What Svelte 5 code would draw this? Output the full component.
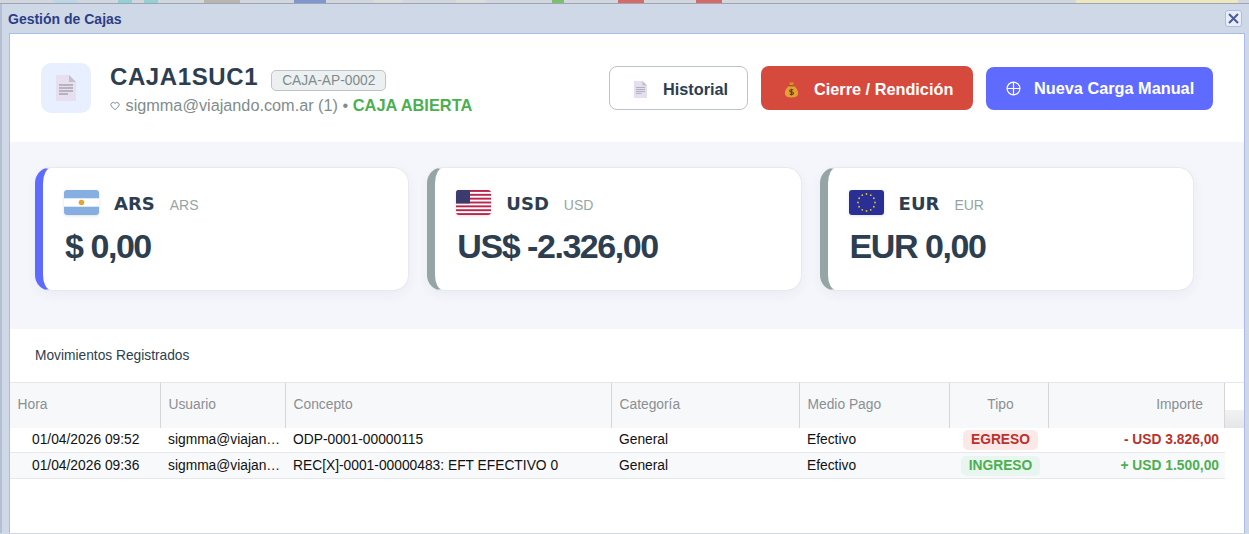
<script>
  const cards = [
    { code: 'ARS', total: '$ 0,00', accent: 'active' },
    { code: 'USD', total: 'US$ -2.326,00', accent: '' },
    { code: 'EUR', total: 'EUR 0,00', accent: '' }
  ];

  const columns = [
    { label: 'Hora', width: 151, cls: '' },
    { label: 'Usuario', width: 125, cls: '' },
    { label: 'Concepto', width: 326, cls: '' },
    { label: 'Categoría', width: 188, cls: '' },
    { label: 'Medio Pago', width: 150, cls: '' },
    { label: 'Tipo', width: 99, cls: 'center' },
    { label: 'Importe', width: 176, cls: 'right' }
  ];

  const rows = [
    { hora: '01/04/2026 09:52', usuario: 'sigmma@viajando.com.ar', concepto: 'ODP-0001-00000115', categoria: 'General', medio: 'Efectivo', tipo: 'EGRESO', importe: '- USD 3.826,00' },
    { hora: '01/04/2026 09:36', usuario: 'sigmma@viajando.com.ar', concepto: 'REC[X]-0001-00000483: EFT EFECTIVO 0', categoria: 'General', medio: 'Efectivo', tipo: 'INGRESO', importe: '+ USD 1.500,00' }
  ];

  // what shows of the page behind the window
  const behind = [
    [54, ''], [24, 'b1'], [40, ''], [14, 'b2'], [12, ''], [14, 'b2'], [46, ''], [36, 'b3'],
    [54, ''], [32, 'b4'], [48, ''], [28, 'b5'], [54, ''], [30, 'b5'], [66, ''], [12, 'b7'],
    [54, ''], [26, 'b8'], [52, ''], [26, 'b8'], [354, ''], [162, 'b6']
  ];

  const stars = Array.from({ length: 12 }, (_, i) => {
    const a = (i * Math.PI) / 6;
    return { x: 17.5 + Math.cos(a) * 8.5, y: 12.5 + Math.sin(a) * 8.5 };
  });
</script>

{#snippet docIcon(w, h)}
  <svg width={w} height={h} viewBox="0 0 20 26">
    <path d="M0 0H13L20 7V26H0Z" fill="#e6dff0" />
    <path d="M13 0L20 7H13Z" fill="#c4c0c8" />
    <path d="M3 10H17M3 13H17M3 16H17M3 19H12" stroke="#a9a5ad" stroke-width="1.3" />
  </svg>
{/snippet}

{#snippet flag(code)}
  <svg class="flag" width="35" height="25" viewBox="0 0 35 25">
    {#if code === 'ARS'}
      <rect width="35" height="25" fill="#fff" />
      <rect width="35" height="8.3" fill="#86aee0" />
      <rect y="16.7" width="35" height="8.3" fill="#86aee0" />
      <circle cx="17.5" cy="12.5" r="2.8" fill="#e0a82e" />
    {:else if code === 'USD'}
      <rect width="35" height="25" fill="#fff" />
      {#each [0, 1, 2, 3, 4, 5, 6] as s}
        <rect y={s * 3.85} width="35" height="1.92" fill="#b8264e" />
      {/each}
      <rect width="14" height="13.4" fill="#3c3b6e" />
    {:else}
      <rect width="35" height="25" fill="#2a2f96" />
      {#each stars as s}
        <circle cx={s.x} cy={s.y} r="0.9" fill="#e2c428" />
      {/each}
    {/if}
  </svg>
{/snippet}

<div class="desk">
  <div class="behind">
    {#each behind as [w, cls]}
      <span class={cls} style="width:{w}px"></span>
    {/each}
  </div>

  <section class="window">
    <header class="titlebar">
      <span class="title">Gestión de Cajas</span>
      <button class="close" aria-label="Cerrar">
        <svg width="11" height="11" viewBox="0 0 11 11"><path d="M1 1L10 10M10 1L1 10" stroke="#4a5a9a" stroke-width="2" /></svg>
      </button>
    </header>

    <div class="body">
      <div class="head">
        <div class="head-left">
          <div class="logo">{@render docIcon(20, 26)}</div>
          <div>
            <div class="name-row">
              <h1>CAJA1SUC1</h1>
              <span class="code">CAJA-AP-0002</span>
            </div>
            <div class="sub">
              <svg class="heart" width="10" height="10" viewBox="0 0 12 12"><path d="M6 10.6L1.5 6A2.7 2.7 0 0 1 6 2.9A2.7 2.7 0 0 1 10.5 6Z" fill="none" stroke="#7f8c8d" stroke-width="1.2" /></svg>
              sigmma@viajando.com.ar (1) • <b>CAJA ABIERTA</b>
            </div>
          </div>
        </div>
        <div class="actions">
          <button class="btn ghost">{@render docIcon(13, 17)}<span>Historial</span></button>
          <button class="btn red">
            <svg width="15" height="18" viewBox="0 0 17 19">
              <path d="M6 1H11L10 4.5H7Z" fill="#d9952a" />
              <path d="M6.5 4.5H10.5C14 7 16 10 16 13C16 17 13 18 8.5 18C4 18 1 17 1 13C1 10 3 7 6.5 4.5Z" fill="#e2a035" />
              <rect x="6" y="4" width="5" height="1.4" fill="#8a5a18" />
              <path d="M10.5 9.2H7.8A1.3 1.3 0 0 0 7.8 11.8H9.4A1.3 1.3 0 0 1 9.4 14.4H6.6M8.5 8V15.6" fill="none" stroke="#6b3d10" stroke-width="1.3" />
            </svg>
            <span>Cierre / Rendición</span>
          </button>
          <button class="btn blue">
            <svg width="15" height="15" viewBox="0 0 15 15"><circle cx="7.5" cy="7.5" r="6.4" fill="none" stroke="#fff" stroke-width="1.2" /><path d="M1 7.5H14M7.5 1V14" stroke="#fff" stroke-width="1.2" /></svg>
            <span>Nueva Carga Manual</span>
          </button>
        </div>
      </div>

      <div class="summary">
        {#each cards as card}
          <article class="card {card.accent}">
            <div class="card-top">
              {@render flag(card.code)}
              <strong>{card.code}</strong>
              <small>{card.code}</small>
            </div>
            <div class="total">{card.total}</div>
          </article>
        {/each}
      </div>

      <div class="label">Movimientos Registrados</div>

      <div class="grid">
        <div class="grid-head">
          {#each columns as col}
            <div class="th {col.cls}" style="width:{col.width}px">{col.label}</div>
          {/each}
          <div class="filler"></div>
        </div>
        {#each rows as row, i}
          <div class="tr" class:alt={i === 1}>
            <div class="td hora" style="width:{columns[0].width}px">{row.hora}</div>
            <div class="td" style="width:{columns[1].width}px"><span class="clip">{row.usuario}</span></div>
            <div class="td" style="width:{columns[2].width}px">{row.concepto}</div>
            <div class="td" style="width:{columns[3].width}px">{row.categoria}</div>
            <div class="td" style="width:{columns[4].width}px">{row.medio}</div>
            <div class="td center" style="width:{columns[5].width}px">
              <span class="pill" class:in={row.tipo === 'INGRESO'}>{row.tipo}</span>
            </div>
            <div class="td right amount" class:in={row.tipo === 'INGRESO'} style="width:{columns[6].width}px">{row.importe}</div>
          </div>
        {/each}
      </div>
    </div>
  </section>
</div>

<style>
  :global(body) {
    margin: 0;
    background: #fff;
  }

  .desk {
    width: 1249px;
    height: 534px;
    overflow: hidden;
    font-family: 'Liberation Sans', Arial, sans-serif;
    background: #cfd8e6;
  }

  .behind {
    display: flex;
    height: 4px;
    background: #d3d6dc;
    border-bottom: 1px solid #9aa5b5;
    box-sizing: border-box;
  }

  .b1 { background: #bcd6e6; }
  .b2 { background: #93cfd3; }
  .b3 { background: #b9b5ad; }
  .b4 { background: #7f97cf; }
  .b5 { background: #dcdcdc; }
  .b6 { background: #efe8bf; }
  .b7 { background: #7cc06a; }
  .b8 { background: #d66a66; }

  .window {
    padding-left: 7px;
    padding-right: 4px;
    border-left: 2px solid #b4bfd4;
  }

  .titlebar {
    height: 29px;
    display: flex;
    align-items: center;
    justify-content: space-between;
  }

  .title {
    font-size: 14px;
    font-weight: 700;
    color: #2c3e85;
    padding-top: 1px;
    margin-left: -1px;
  }

  .close {
    width: 17px;
    height: 17px;
    padding: 0;
    display: flex;
    align-items: center;
    justify-content: center;
    background: #e8eefb;
    border: 1px solid #a9bce8;
    border-radius: 3px;
    margin-right: 3px;
  }

  .body {
    height: 500px;
    background: #fff;
    border: 1px solid #a9bce8;
    border-bottom: 0;
    box-sizing: border-box;
  }

  .head {
    height: 108px;
    box-sizing: border-box;
    padding: 29px 31px 0 31px;
    display: flex;
    justify-content: space-between;
  }

  .head-left {
    display: flex;
    gap: 19px;
  }

  .logo {
    width: 50px;
    height: 50px;
    background: #e8effe;
    border-radius: 10px;
    display: flex;
    align-items: center;
    justify-content: center;
  }

  .name-row {
    display: flex;
    align-items: center;
    gap: 13px;
    height: 28px;
  }

  h1 {
    margin: 0;
    font-size: 24px;
    font-weight: 700;
    color: #2c3e50;
    letter-spacing: 0.6px;
  }

  .code {
    margin-top: 7px;
    font-size: 13.75px;
    color: #7f8c8d;
    background: #ecf0f1;
    border: 1px solid #bdc3c7;
    border-radius: 5px;
    padding: 2px 10px;
  }

  .sub {
    margin-top: 5px;
    font-size: 16.25px;
    color: #7f8c8d;
    white-space: nowrap;
  }

  .sub b {
    color: #4caf50;
    font-size: 16.4px;
  }

  .heart {
    margin-right: 1px;
  }

  .actions {
    display: flex;
    align-items: flex-start;
    gap: 13px;
    padding-top: 3px;
  }

  .btn {
    display: flex;
    align-items: center;
    height: 44px;
    border-radius: 8px;
    font-family: inherit;
    font-size: 16.3px;
    font-weight: 700;
    border: 0;
    box-sizing: border-box;
    white-space: nowrap;
  }

  .ghost {
    width: 139px;
    padding: 3px 0 0 24px;
    gap: 16px;
    background: #fff;
    border: 1px solid #bdc3c7;
    color: #2c3e50;
  }

  .red {
    width: 212px;
    padding: 3px 0 0 23px;
    gap: 15px;
    background: #d64a3e;
    color: #fff;
  }

  .blue {
    width: 227px;
    height: 43px;
    margin-top: 1px;
    padding: 0 0 1px 20px;
    gap: 13px;
    background: #5f6bff;
    color: #fff;
  }

  .summary {
    height: 187px;
    box-sizing: border-box;
    background: #f4f6fb;
    padding: 25px 25px 0;
    display: flex;
    gap: 18px;
  }

  .card {
    width: 374.3px;
    height: 124px;
    box-sizing: border-box;
    background: #fff;
    border: 1px solid #e6e9f0;
    border-left: 8px solid #95a5a6;
    border-radius: 16px;
    box-shadow: 0 4px 12px rgba(40, 50, 90, 0.05);
    padding: 21px 21px 0;
  }

  .card.active {
    border-left-color: #5f6bff;
  }

  .card-top {
    display: flex;
    align-items: center;
    height: 27px;
  }

  .flag {
    border-radius: 3px;
    box-shadow: 0 1px 3px rgba(0, 0, 0, 0.12);
    margin-right: 15px;
  }

  .card-top strong {
    font-family: 'DejaVu Sans', sans-serif;
    font-size: 18px;
    color: #2c3e50;
    margin: 1px 15px 0 0;
  }

  .card-top small {
    font-size: 14px;
    color: #95a5a6;
    margin-top: 5px;
  }

  .total {
    margin-top: 11px;
    padding-left: 1px;
    font-size: 34px;
    font-weight: 700;
    letter-spacing: -1.45px;
    color: #2c3e50;
  }

  .label {
    height: 53px;
    box-sizing: border-box;
    padding: 19px 0 0 25px;
    font-size: 13.75px;
    color: #2c3e50;
  }

  .grid {
    border-top: 1px solid #e4e7ec;
    font-size: 13.8px;
  }

  .grid-head {
    display: flex;
    height: 45px;
    background: #f7f8fa;
  }

  .filler {
    flex: 1;
    background: linear-gradient(#fff 0 27px, #f2f2f2 27px, #e6e6e6);
  }

  .th {
    box-sizing: border-box;
    padding: 14px 8px 0 7.5px;
    color: #8a8f94;
    border-right: 1px solid #d4d6da;
  }

  .th.center { text-align: center; padding-left: 11px; }
  .th.right { text-align: right; padding-right: 21px; }

  .tr {
    display: flex;
    height: 25px;
    box-sizing: border-box;
    width: 1215px;
    border-bottom: 1px solid #e6e8ec;
    line-height: 23px;
    color: #111;
  }

  .tr.alt {
    height: 26px;
    background: #f7f9fb;
    line-height: 25px;
  }

  .td {
    box-sizing: border-box;
    padding: 0 5px 0 7px;
    white-space: nowrap;
  }

  .td.hora {
    padding-left: 22px;
  }

  .clip {
    display: block;
    overflow: hidden;
    text-overflow: ellipsis;
  }

  .center { text-align: center; }
  .right { text-align: right; }

  .pill {
    display: inline-block;
    line-height: 20px;
    vertical-align: top;
    margin-top: 2px;
    padding: 0 7.5px;
    border-radius: 5px;
    font-weight: 700;
    background: #fbe9e7;
    color: #b9322c;
  }

  .pill.in {
    margin-top: 3px;
    background: #e8f6ef;
    color: #4caf50;
  }

  .amount {
    font-weight: 700;
    color: #b9322c;
    padding-right: 6px;
  }

  .amount.in {
    color: #4caf50;
  }
</style>
